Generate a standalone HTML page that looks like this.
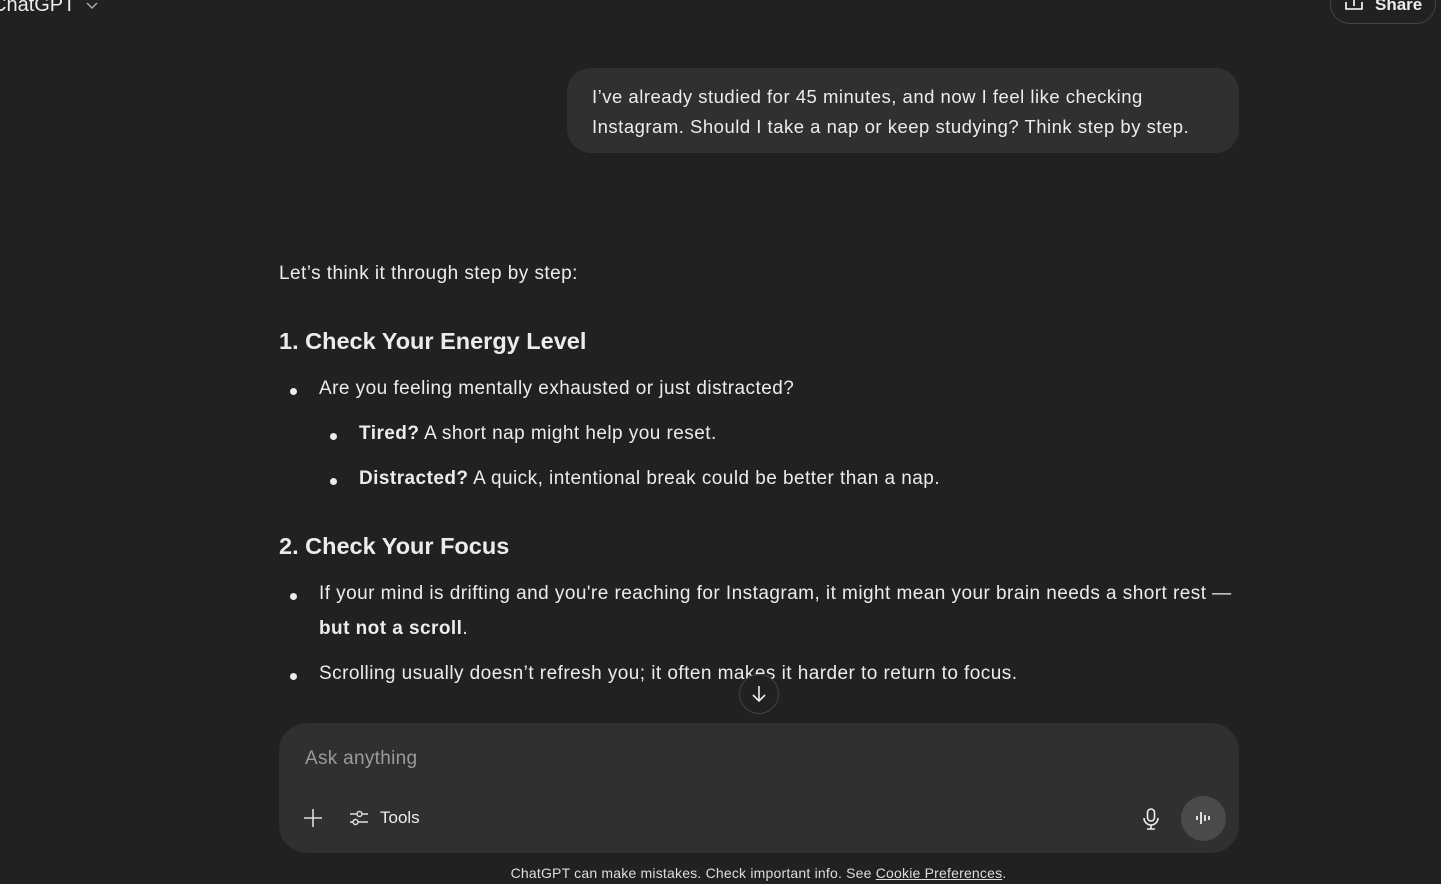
<!DOCTYPE html>
<html><head><meta charset="utf-8"><style>
*{margin:0;padding:0;box-sizing:border-box}
body{width:1441px;height:884px;background:#212121;color:#ececec;font-family:"Liberation Sans",sans-serif;position:relative;overflow:hidden}
.a{position:absolute;white-space:nowrap}
.t{font-size:19px;letter-spacing:0.45px}
.h{font-size:23.5px;font-weight:bold}
.dot{position:absolute;width:7px;height:7px;border-radius:50%;background:#ececec}
b{font-weight:bold}
</style></head><body>
<div class="a" style="left:-8px;top:-6px;font-size:20px;color:#ececec">ChatGPT <svg width="14" height="10" viewBox="0 0 14 10" style="margin-left:4px"><path d="M2 2l5 5 5-5" stroke="#aaa" stroke-width="1.5" fill="none"/></svg></div>
<div class="a" style="left:1330px;top:-16px;width:106px;height:40px;border:1px solid #444;border-radius:20px"></div>
<svg class="a" style="left:1344px;top:-4px" width="20" height="16" viewBox="0 0 20 16"><path d="M10 10V-2M2 6v7h16V6" stroke="#fff" stroke-width="1.6" fill="none"/></svg>
<div class="a" style="left:1375px;top:-5px;font-size:17px;font-weight:bold">Share</div>

<div class="a" style="left:567px;top:68px;width:672px;height:85px;background:#303030;border-radius:24px"></div>
<div class="a t" style="left:592px;top:82px;line-height:30px;font-size:18.5px;letter-spacing:0.5px">I’ve already studied for 45 minutes, and now I feel like checking<br>Instagram. Should I take a nap or keep studying? Think step by step.</div>

<div class="a t" style="left:279px;top:263px">Let’s think it through step by step:</div>
<div class="a h" style="left:279px;top:328px">1. Check Your Energy Level</div>
<div class="dot" style="left:290px;top:388px"></div>
<div class="a t" style="left:319px;top:378px">Are you feeling mentally exhausted or just distracted?</div>
<div class="dot" style="left:330px;top:433px"></div>
<div class="a t" style="left:359px;top:423px"><b>Tired?</b> A short nap might help you reset.</div>
<div class="dot" style="left:330px;top:478px"></div>
<div class="a t" style="left:359px;top:468px"><b>Distracted?</b> A quick, intentional break could be better than a nap.</div>
<div class="a h" style="left:279px;top:533px">2. Check Your Focus</div>
<div class="dot" style="left:290px;top:593px"></div>
<div class="a t" style="left:319px;top:583px">If your mind is drifting and you're reaching for Instagram, it might mean your brain needs a short rest —</div>
<div class="a t" style="left:319px;top:618px"><b>but not a scroll</b>.</div>
<div class="dot" style="left:290px;top:673px"></div>
<div class="a t" style="left:319px;top:663px">Scrolling usually doesn’t refresh you; it often makes it harder to return to focus.</div>

<div class="a" style="left:739px;top:674px;width:40px;height:40px;border-radius:50%;border:1px solid #444;background:#212121"></div>
<svg class="a" style="left:749px;top:684px" width="20" height="20" viewBox="0 0 20 20"><path d="M10 2v15M4 11l6 6 6-6" stroke="#eee" stroke-width="1.6" fill="none"/></svg>

<div class="a" style="left:279px;top:723px;width:960px;height:130px;background:#303030;border-radius:28px"></div>
<div class="a" style="left:305px;top:748px;font-size:19px;letter-spacing:0.3px;color:#9b9b9b">Ask anything</div>
<svg class="a" style="left:303px;top:808px" width="20" height="20" viewBox="0 0 20 20"><path d="M10 1v18M1 10h18" stroke="#ddd" stroke-width="1.6"/></svg>
<svg class="a" style="left:349px;top:808px" width="20" height="20" viewBox="0 0 20 20"><path d="M1 6h7M13 6h6M1 14h3M9 14h10" stroke="#ddd" stroke-width="1.5"/><circle cx="10.5" cy="6" r="2.5" stroke="#ddd" stroke-width="1.5" fill="none"/><circle cx="6.5" cy="14" r="2.5" stroke="#ddd" stroke-width="1.5" fill="none"/></svg>
<div class="a" style="left:380px;top:808px;font-size:17px">Tools</div>
<svg class="a" style="left:1141px;top:807px" width="20" height="24" viewBox="0 0 20 24"><rect x="6.5" y="2" width="7" height="12" rx="3.5" stroke="#eee" stroke-width="1.6" fill="none"/><path d="M3 11a7 7 0 0 0 14 0M10 18v4M6 22h8" stroke="#eee" stroke-width="1.6" fill="none"/></svg>
<div class="a" style="left:1181px;top:796px;width:45px;height:45px;border-radius:50%;background:#4a4a4a"></div>
<svg class="a" style="left:1193px;top:808px" width="20" height="20" viewBox="0 0 20 20"><path d="M4 8v4M8 4v12M12 7v6M16 8v4" stroke="#eee" stroke-width="1.8"/></svg>

<div class="a" style="left:0;width:1517px;text-align:center;top:865px;font-size:14px;letter-spacing:0.2px;color:#ddd">ChatGPT can make mistakes. Check important info. See <u>Cookie Preferences</u>.</div>
</body></html>
